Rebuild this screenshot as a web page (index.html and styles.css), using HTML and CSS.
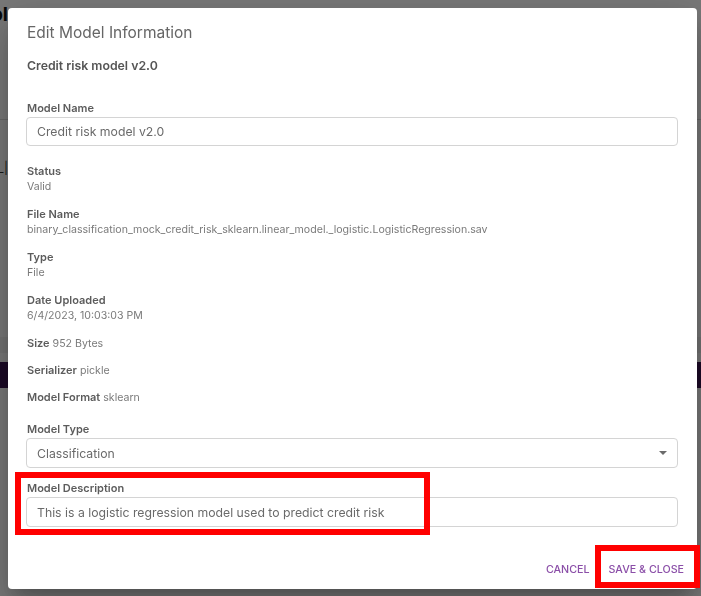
FILE: index.html
```html
<!DOCTYPE html>
<html>
<head>
<meta charset="utf-8">
<link rel="stylesheet" href="styles.css">
</head>
<body>
<div class="page">
  <div class="page-head"><div class="page-title-clip"><span class="page-title">Model Tool</span></div></div>
  <div class="page-row"><div class="page-cell-clip"><span class="page-cell">model_name_|</span></div></div>
  <div class="page-band"></div>
  <div class="page-purple"></div>
</div>
<div class="scrim">
  <div class="dialog">
    <h2 class="dialog-title">Edit Model Information</h2>
    <div class="dialog-content">
      <h3 class="model-title">Credit risk model v2.0</h3>
      <div class="field field-first">
        <label class="field-label">Model Name</label>
        <div class="text-input">Credit risk model v2.0</div>
      </div>
      <div class="info-list">
        <div class="info"><div class="info-label">Status</div><div class="info-value">Valid</div></div>
        <div class="info"><div class="info-label">File Name</div><div class="info-value">binary_classification_mock_credit_risk_sklearn.linear_model._logistic.LogisticRegression.sav</div></div>
        <div class="info"><div class="info-label">Type</div><div class="info-value">File</div></div>
        <div class="info"><div class="info-label">Date Uploaded</div><div class="info-value">6/4/2023, 10:03:03 PM</div></div>
        <div class="inline-list">
          <div class="info-inline"><span class="info-label">Size</span> 952 Bytes</div>
          <div class="info-inline"><span class="info-label">Serializer</span> pickle</div>
          <div class="info-inline"><span class="info-label">Model Format</span> sklearn</div>
        </div>
      </div>
      <div class="field field-type">
        <label class="field-label">Model Type</label>
        <div class="text-input select">Classification
          <svg class="caret" width="8" height="4" viewBox="0 0 8 4"><path d="M0 0 L8 0 L4 4 Z" fill="#6b6b6b"/></svg>
        </div>
      </div>
      <div class="field field-desc">
        <label class="field-label">Model Description</label>
        <div class="text-input desc">This is a logistic regression model used to predict credit risk</div>
      </div>
    </div>
    <div class="dialog-actions">
      <button class="btn">Cancel</button>
      <button class="btn">Save &amp; Close</button>
    </div>
    <div class="annot annot-desc"></div>
    <div class="annot annot-save"></div>
  </div>
</div>
</body>
</html>
```

FILE: styles.css
```css
* { box-sizing: border-box; }
html, body { margin: 0; padding: 0; }
body {
  width: 701px;
  height: 596px;
  overflow: hidden;
  font-family: Inter, "Noto Sans", sans-serif;
  background: #ffffff;
}
.page {
  height: 596px;
  background: #fafafa;
}
.page-head {
  height: 120px;
  padding-top: 3px;
  border-bottom: 1px solid #d8d8d8;
}
.page-title-clip {
  width: 8px;
  overflow: hidden;
  display: flex;
  justify-content: flex-end;
}
.page-title {
  white-space: nowrap;
  font-size: 19px;
  line-height: 24px;
  font-weight: 700;
  color: #111;
}
.page-row {
  height: 57px;
  padding-top: 40px;
}
.page-cell-clip {
  width: 8px;
  overflow: hidden;
  display: flex;
  justify-content: flex-end;
}
.page-cell {
  white-space: nowrap;
  font-size: 12px;
  line-height: 15px;
  color: #333;
}
.page-band {
  margin-top: 160px;
  height: 16px;
  background: #eeeeee;
}
.page-purple {
  margin-top: 9px;
  height: 26px;
  background: #3a1450;
}
.scrim {
  position: fixed;
  inset: 0;
  background: rgba(0, 0, 0, 0.52);
}
.dialog {
  position: absolute;
  left: 8px;
  top: 8px;
  width: 689px;
  height: 581px;
  background: #fff;
  border-radius: 4px;
  box-shadow: 0 11px 15px -7px rgba(0,0,0,0.2), 0 24px 38px 3px rgba(0,0,0,0.14), 0 9px 46px 8px rgba(0,0,0,0.12);
  display: flex;
  flex-direction: column;
  padding: 13px 19px 0 18px;
}
.dialog-title {
  margin: 0;
  font-size: 15.5px;
  line-height: 24px;
  font-weight: 400;
  color: #666;
  padding-left: 1px;
}
.dialog-content {
  display: flex;
  flex-direction: column;
}
.model-title {
  margin: 12px 0 0 0;
  font-size: 12.3px;
  line-height: 18px;
  font-weight: 600;
  color: #555;
  padding-left: 1px;
}
.field { display: flex; flex-direction: column; }
.field-first { margin-top: 26px; }
.field-label {
  font-size: 11px;
  line-height: 15px;
  font-weight: 600;
  color: #5c5c5c;
  padding-left: 1px;
}
.text-input {
  margin-top: 1px;
  height: 29px;
  border: 1px solid #d4d4d4;
  border-radius: 4px;
  padding: 0 10px;
  font-size: 12.25px;
  color: #6a6a6a;
  display: flex;
  align-items: center;
}
.select { height: 30px; justify-content: space-between; }
.desc { height: 30px; }
.info-list {
  margin-top: 18px;
  display: flex;
  flex-direction: column;
  gap: 13px;
  padding-left: 1px;
}
.inline-list {
  display: flex;
  flex-direction: column;
  gap: 12px;
}
.info { display: flex; flex-direction: column; }
.info-label {
  font-size: 11px;
  line-height: 15px;
  font-weight: 600;
  color: #5c5c5c;
}
.info-value {
  font-size: 10.6px;
  line-height: 15px;
  color: #7a7a7a;
}
.info-inline {
  font-size: 10.6px;
  line-height: 15px;
  color: #7a7a7a;
}
.field-type { margin-top: 17px; }
.field-desc { margin-top: 13px; }
.dialog-actions {
  margin-top: auto;
  display: flex;
  justify-content: flex-end;
  gap: 9px;
  padding: 0 0 3px 0;
  margin-right: -11px;
}
.btn {
  background: none;
  border: none;
  padding: 6px 5px;
  font-family: Inter, "Noto Sans", sans-serif;
  font-size: 10.7px;
  line-height: 20px;
  font-weight: 500;
  letter-spacing: 0;
  text-transform: uppercase;
  color: #8b4fa8;
}
.annot {
  position: absolute;
  border: 6px solid #ff0000;
}
.annot-desc { left: 7px; top: 464px; width: 415px; height: 63px; }
.annot-save { left: 587px; top: 537px; width: 105px; height: 43px; }
```
